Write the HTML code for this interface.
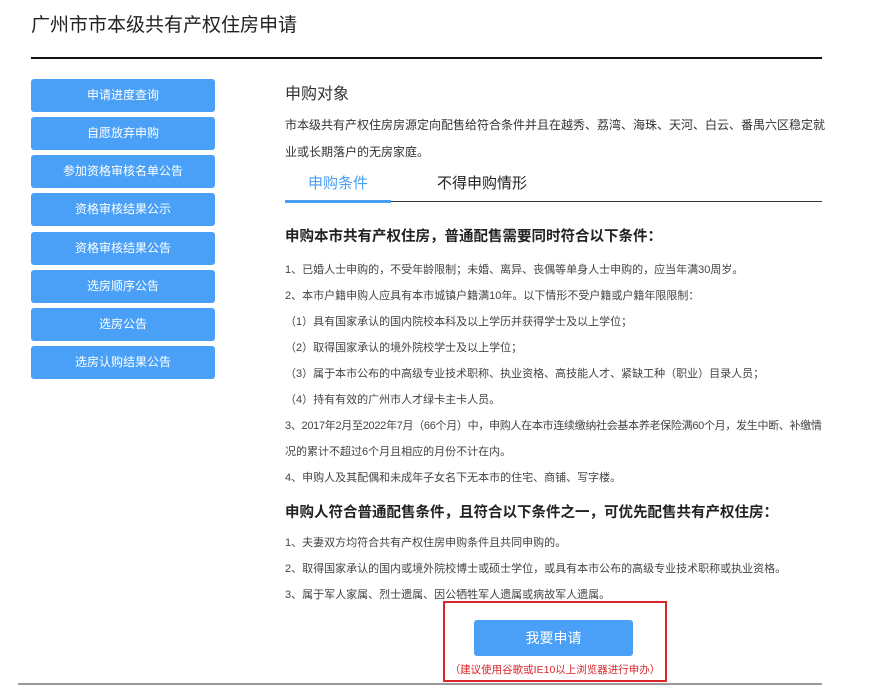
<!DOCTYPE html>
<html><head><meta charset="utf-8"><style>
*{margin:0;padding:0;box-sizing:border-box}
body{width:882px;height:693px;background:#fff;font-family:"Liberation Sans","Noto Sans CJK SC",sans-serif;color:#333;position:relative;overflow:hidden}
.a{position:absolute;white-space:nowrap}
.btn{position:absolute;left:31px;width:184px;height:33px;background:#4aa0f7;border-radius:3px;color:#fff;font-size:12px;line-height:33px;text-align:center}
.li{position:absolute;left:285px;font-size:11px;color:#444;white-space:nowrap}
.h{position:absolute;left:285px;font-size:14.5px;font-weight:bold;color:#222;white-space:nowrap}
</style></head><body>
<div class="a" style="left:31px;top:10px;font-size:19px;color:#222">广州市市本级共有产权住房申请</div>
<div class="a" style="left:31px;top:57px;width:791px;height:2px;background:#111"></div>
<div class="btn" style="top:79px">申请进度查询</div>
<div class="btn" style="top:117px">自愿放弃申购</div>
<div class="btn" style="top:155px">参加资格审核名单公告</div>
<div class="btn" style="top:193px">资格审核结果公示</div>
<div class="btn" style="top:232px">资格审核结果公告</div>
<div class="btn" style="top:270px">选房顺序公告</div>
<div class="btn" style="top:308px">选房公告</div>
<div class="btn" style="top:346px">选房认购结果公告</div>
<div class="a" style="left:285px;top:80px;font-size:16px;color:#333">申购对象</div>
<div class="a" style="left:285px;top:112px;font-size:12px;color:#333;line-height:27px;white-space:normal;width:540px">市本级共有产权住房房源定向配售给符合条件并且在越秀、荔湾、海珠、天河、白云、番禺六区稳定就业或长期落户的无房家庭。</div>
<div class="a" style="left:308px;top:172px;font-size:15px;color:#4a9ff5">申购条件</div>
<div class="a" style="left:437px;top:172px;font-size:15px;color:#222">不得申购情形</div>
<div class="a" style="left:285px;top:201px;width:537px;height:1px;background:#333"></div>
<div class="a" style="left:285px;top:200px;width:106px;height:3px;background:#4a9ff5"></div>
<div class="h" style="top:225px">申购本市共有产权住房，普通配售需要同时符合以下条件：</div>
<div class="li" style="top:261px">1、已婚人士申购的，不受年龄限制；未婚、离异、丧偶等单身人士申购的，应当年满30周岁。</div>
<div class="li" style="top:287px">2、本市户籍申购人应具有本市城镇户籍满10年。以下情形不受户籍或户籍年限限制：</div>
<div class="li" style="top:313px">（1）具有国家承认的国内院校本科及以上学历并获得学士及以上学位；</div>
<div class="li" style="top:339px">（2）取得国家承认的境外院校学士及以上学位；</div>
<div class="li" style="top:365px">（3）属于本市公布的中高级专业技术职称、执业资格、高技能人才、紧缺工种（职业）目录人员；</div>
<div class="li" style="top:391px">（4）持有有效的广州市人才绿卡主卡人员。</div>
<div class="li" style="top:417px;letter-spacing:-0.3px">3、2017年2月至2022年7月（66个月）中，申购人在本市连续缴纳社会基本养老保险满60个月，发生中断、补缴情</div>
<div class="li" style="top:443px">况的累计不超过6个月且相应的月份不计在内。</div>
<div class="li" style="top:469px">4、申购人及其配偶和未成年子女名下无本市的住宅、商铺、写字楼。</div>
<div class="h" style="top:501px">申购人符合普通配售条件，且符合以下条件之一，可优先配售共有产权住房：</div>
<div class="li" style="top:534px">1、夫妻双方均符合共有产权住房申购条件且共同申购的。</div>
<div class="li" style="top:560px">2、取得国家承认的国内或境外院校博士或硕士学位，或具有本市公布的高级专业技术职称或执业资格。</div>
<div class="li" style="top:586px">3、属于军人家属、烈士遗属、因公牺牲军人遗属或病故军人遗属。</div>
<div class="a" style="left:18px;top:683px;width:804px;height:2px;background:#999"></div>
<div class="a" style="left:443px;top:601px;width:224px;height:81px;border:2px solid #d9252b;background:#fff"></div>
<div class="a" style="left:474px;top:620px;width:159px;height:36px;background:#4aa0f7;border-radius:3px;color:#fff;font-size:14px;line-height:36px;text-align:center">我要申请</div>
<div class="a" style="left:443px;top:662px;width:224px;text-align:center;font-size:10.5px;color:#d9252b">（建议使用谷歌或IE10以上浏览器进行申办）</div>
</body></html>
